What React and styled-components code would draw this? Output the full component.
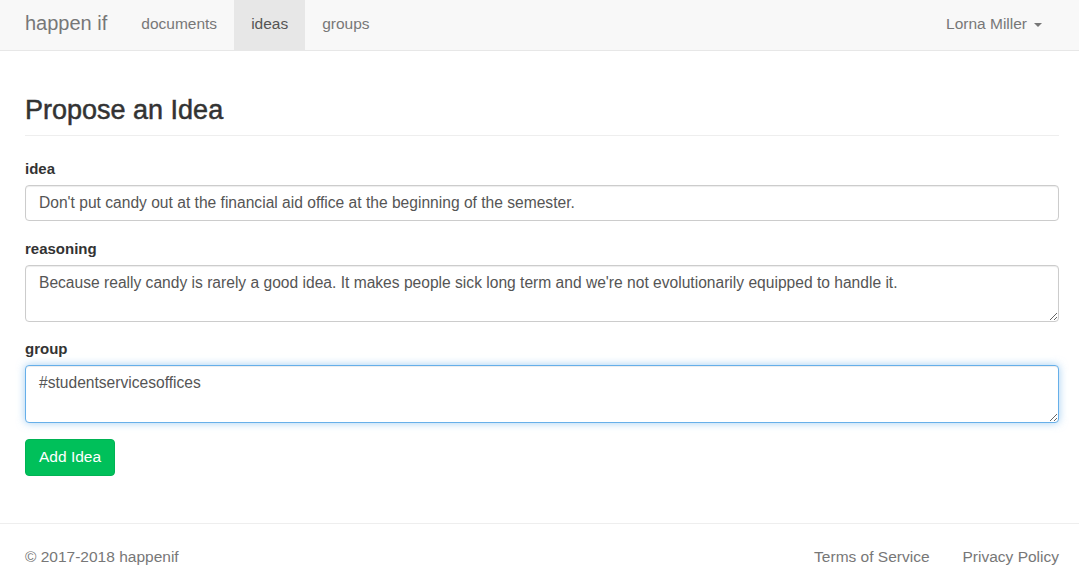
import React, { useEffect, useRef } from "react";
import styled, { createGlobalStyle } from "styled-components";

const GlobalStyle = createGlobalStyle`
  * { box-sizing: border-box; }
  body {
    margin: 0;
    background: #fff;
    font-family: "Liberation Sans", Arial, sans-serif;
    font-size: 15px;
    color: #333;
  }
`;

const Navbar = styled.nav`
  height: 51px;
  background: #f8f8f8;
  border-bottom: 1px solid #e7e7e7;
  display: flex;
  align-items: stretch;
  padding: 0 20px 0 25px;
`;

const Brand = styled.a`
  font-size: 20px;
  color: #777;
  display: flex;
  align-items: center;
  padding-bottom: 3px;
  margin-right: 17px;
`;

const NavList = styled.ul`
  list-style: none;
  margin: 0;
  padding: 0;
  display: flex;
  margin-left: ${(p) => (p.right ? "auto" : "0")};
`;

const NavLink = styled.li`
  display: flex;
  align-items: center;
  padding: 0 17px 2px;
  font-size: 15.5px;
  color: ${(p) => (p.active ? "#555" : "#777")};
  background: ${(p) => (p.active ? "#e7e7e7" : "transparent")};
`;

const Caret = styled.span`
  display: inline-block;
  margin-left: 7px;
  margin-top: 2px;
  border-top: 4px solid #777;
  border-left: 4px solid transparent;
  border-right: 4px solid transparent;
`;

const Main = styled.main`
  padding: 0 20px 0 25px;
`;

const PageHeader = styled.div`
  padding: 45px 0 9px;
  border-bottom: 1px solid #eee;
`;

const Title = styled.h1`
  margin: 0;
  font-size: 27px;
  font-weight: 500;
  line-height: 1.1;
  color: #333;
  -webkit-text-stroke: 0.5px #333;
`;

const Form = styled.form`
  display: flex;
  flex-direction: column;
  padding-top: 24px;
`;

const Group = styled.div`
  display: flex;
  flex-direction: column;
  margin-bottom: ${(p) => p.space}px;
`;

const Label = styled.label`
  font-weight: bold;
  font-size: 15px;
  line-height: 18px;
  margin-bottom: 7px;
`;

const fieldStyles = `
  width: 100%;
  border: 1px solid #ccc;
  border-radius: 4px;
  padding: 7px 13px;
  font-family: "Liberation Sans", Arial, sans-serif;
  font-size: 15.6px;
  line-height: 20px;
  color: #555;
  background: #fff;
  box-shadow: inset 0 1px 1px rgba(0, 0, 0, 0.075);
  outline: none;
  &:focus {
    border-color: #66afe9;
    box-shadow: inset 0 1px 1px rgba(0, 0, 0, .075), 0 0 8px rgba(102, 175, 233, .6);
  }
`;

const Input = styled.input`
  ${fieldStyles}
  height: 36px;
`;

const TextArea = styled.textarea`
  ${fieldStyles}
  height: ${(p) => p.h}px;
  resize: vertical;
  display: block;
  caret-color: #333;
`;

const Button = styled.button`
  align-self: flex-start;
  background: #00c05a;
  border: 1px solid #00b354;
  border-radius: 4px;
  color: #fff;
  font-family: "Liberation Sans", Arial, sans-serif;
  font-size: 15.5px;
  height: 37px;
  padding: 0 13px;
`;

const Footer = styled.footer`
  margin-top: 47px;
  border-top: 1px solid #eee;
  display: flex;
  justify-content: space-between;
  padding: 24px 20px 0 25px;
  color: #777;
  font-size: 15.5px;
`;

const FooterLinks = styled.div`
  display: flex;
  gap: 33px;
`;

export default function App() {
  const groupRef = useRef(null);

  useEffect(() => {
    const el = groupRef.current;
    if (el) {
      el.focus();
      el.setSelectionRange(el.value.length, el.value.length);
    }
  }, []);

  return (
    <>
      <GlobalStyle />
      <Navbar>
        <Brand>happen if</Brand>
        <NavList>
          <NavLink>documents</NavLink>
          <NavLink active>ideas</NavLink>
          <NavLink>groups</NavLink>
        </NavList>
        <NavList right>
          <NavLink>
            Lorna Miller
            <Caret />
          </NavLink>
        </NavList>
      </Navbar>
      <Main>
        <PageHeader>
          <Title>Propose an Idea</Title>
        </PageHeader>
        <Form onSubmit={(e) => e.preventDefault()}>
          <Group space={19}>
            <Label>idea</Label>
            <Input defaultValue="Don't put candy out at the financial aid office at the beginning of the semester." />
          </Group>
          <Group space={18}>
            <Label>reasoning</Label>
            <TextArea
              h={57}
              defaultValue="Because really candy is rarely a good idea. It makes people sick long term and we're not evolutionarily equipped to handle it."
            />
          </Group>
          <Group space={16}>
            <Label>group</Label>
            <TextArea h={58} ref={groupRef} defaultValue="#studentservicesoffices" />
          </Group>
          <Button type="submit">Add Idea</Button>
        </Form>
      </Main>
      <Footer>
        <span>© 2017-2018 happenif</span>
        <FooterLinks>
          <span>Terms of Service</span>
          <span>Privacy Policy</span>
        </FooterLinks>
      </Footer>
    </>
  );
}
